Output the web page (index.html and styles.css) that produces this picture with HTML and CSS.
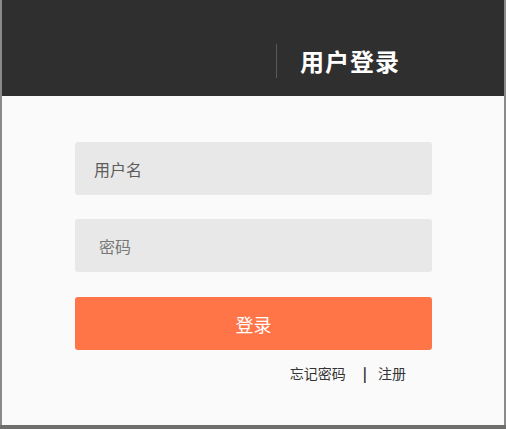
FILE: index.html
```html
<!DOCTYPE html>
<html lang="zh">
<head>
<meta charset="utf-8">
<link rel="stylesheet" href="styles.css">
</head>
<body>
<div class="frame">
  <header class="header">
    <span class="divider"></span>
    <h1 class="title">用户登录</h1>
  </header>
  <main class="main">
    <div class="field"><span class="ph">用户名</span></div>
    <div class="field"><span class="ph ph-pw">密码</span></div>
    <button class="btn">登录</button>
    <div class="links"><a class="link">忘记密码</a><span class="sep">|</span><a class="link">注册</a></div>
  </main>
</div>
</body>
</html>
```
FILE: styles.css
```css
html, body { margin: 0; padding: 0; }
body {
  width: 506px; height: 429px; overflow: hidden;
  font-family: "Noto Sans CJK SC", "Noto Sans", sans-serif;
  background: #6e6e6c;
}
.frame {
  height: 425px;
  display: flex; flex-direction: column;
  box-sizing: border-box;
  border-left: 2px solid #8a8a8a;
  border-right: 2px solid #8a8a8a;
  background: #fafafa;
}
.header {
  height: 96px; flex: none;
  background: #2f2f2f;
  display: flex; align-items: center;
  padding-left: 274px;
  padding-top: 26px;
  box-sizing: border-box;
}
.divider {
  width: 1px; height: 34px; background: #5a5a5a;
}
.title {
  margin: 0 0 0 23px;
  font-size: 24px; font-weight: 700; color: #fff;
  line-height: 1; letter-spacing: 1px;
}
.main {
  flex: 1;
  padding: 46px 72px 0 73px;
  display: flex; flex-direction: column;
}
.field {
  height: 53px; background: #e8e8e8; border-radius: 3px;
  display: flex; align-items: center;
  padding-left: 19px;
  margin-bottom: 24px;
}
.ph { font-size: 16px; color: #5c5c5c; }
.ph-pw { padding-left: 5px; color: #777; }
.btn {
  height: 53px; border: 0; border-radius: 3px;
  background: #ff7548; color: #fff;
  font-family: inherit; font-size: 18px;
  margin-top: 1px; padding: 0;
}
.links {
  display: flex; justify-content: flex-end; align-items: center;
  padding-right: 26px; margin-top: 13px;
  font-size: 14px; color: #333;
}
.sep { margin: 0 11px 0 17px; color: #222; font-weight: 700; }
```
